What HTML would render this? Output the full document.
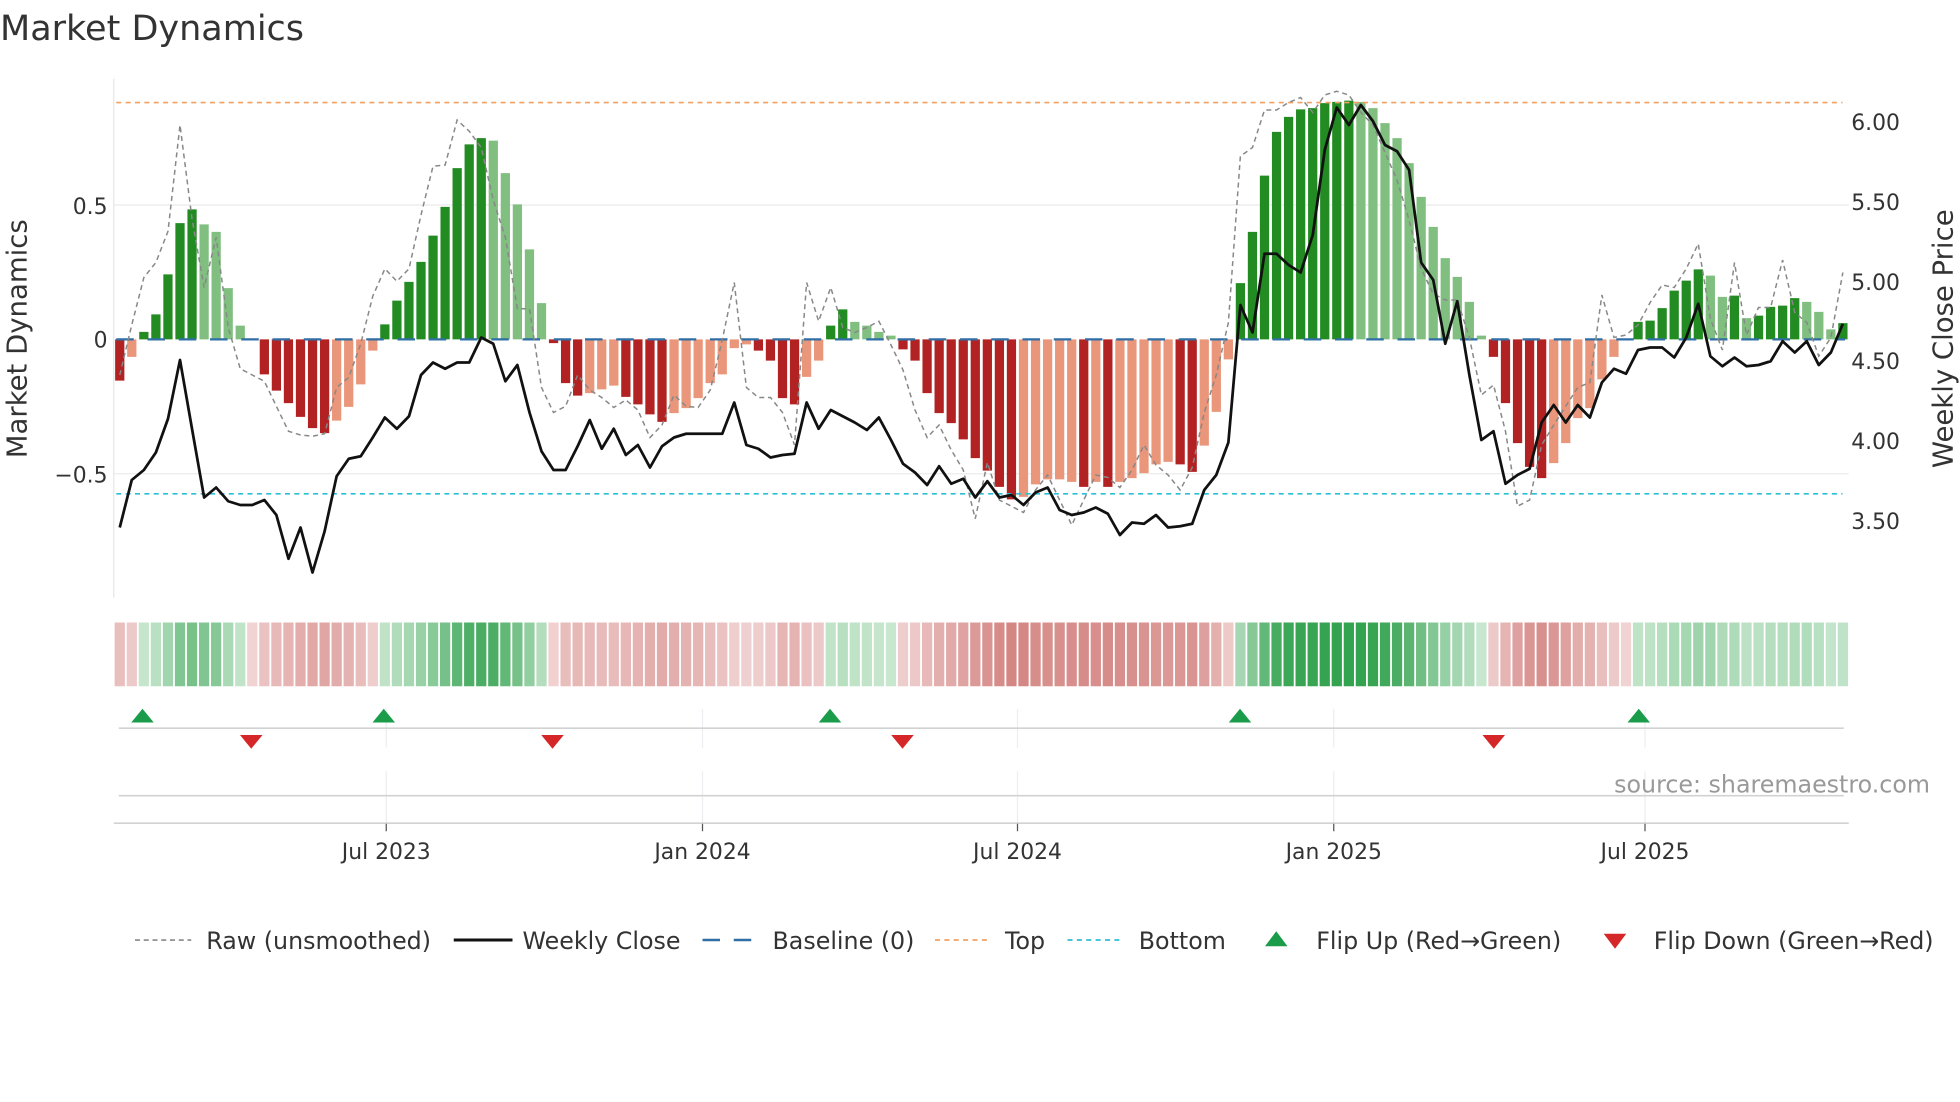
<!DOCTYPE html>
<html><head><meta charset="utf-8"><style>
html,body{margin:0;padding:0;background:#fff;width:1960px;height:1102px;overflow:hidden}
svg{display:block}
text{font-family:"DejaVu Sans","Liberation Sans",sans-serif;fill:#333}
</style></head><body>
<svg id="s" width="1960" height="1102" viewBox="0 0 1568 881.6" xmlns="http://www.w3.org/2000/svg">
<text x="0" y="32" font-size="28">Market Dynamics</text>
<!-- grid -->
<line x1="91" y1="164" x2="1479" y2="164" stroke="#ebebeb" stroke-width="1"/>
<line x1="91" y1="379" x2="1479" y2="379" stroke="#ebebeb" stroke-width="1"/>
<line x1="91" y1="63" x2="91" y2="478" stroke="#e6e6e6" stroke-width="1"/>
<g id="bars"></g>
<line x1="93" y1="82" x2="1474" y2="82" stroke="#f0a062" stroke-width="1.3" stroke-dasharray="4,3.5"/>
<line x1="93" y1="395" x2="1474" y2="395" stroke="#2bbfd6" stroke-width="1.3" stroke-dasharray="4,3.5"/>
<line x1="93" y1="271.5" x2="1476" y2="271.5" stroke="#2f6fa6" stroke-width="1.8" stroke-dasharray="14,11"/>
<polyline id="raw" fill="none" stroke="#888" stroke-width="1.2" stroke-dasharray="4,3"/>
<polyline id="close" fill="none" stroke="#111" stroke-width="2.2" stroke-linejoin="round"/>
<!-- left ticks -->
<text x="86" y="171" font-size="17.5" text-anchor="end">0.5</text>
<text x="86" y="278" font-size="17.5" text-anchor="end">0</text>
<text x="86" y="386" font-size="17.5" text-anchor="end">−0.5</text>
<text transform="translate(21,271) rotate(-90)" font-size="22" text-anchor="middle">Market Dynamics</text>
<!-- right ticks -->
<text x="1481" y="104" font-size="17.5">6.00</text>
<text x="1481" y="168" font-size="17.5">5.50</text>
<text x="1481" y="232" font-size="17.5">5.00</text>
<text x="1481" y="295" font-size="17.5">4.50</text>
<text x="1481" y="359" font-size="17.5">4.00</text>
<text x="1481" y="423" font-size="17.5">3.50</text>
<text transform="translate(1562,271) rotate(-90)" font-size="22" text-anchor="middle">Weekly Close Price</text>
<!-- heatmap -->
<g id="heat"></g>
<!-- marker panel -->
<g stroke="#eceef2" stroke-width="1">
<line x1="309" y1="567" x2="309" y2="598"/><line x1="562" y1="567" x2="562" y2="598"/><line x1="814" y1="567" x2="814" y2="598"/><line x1="1067" y1="567" x2="1067" y2="598"/><line x1="1316" y1="567" x2="1316" y2="598"/>
<line x1="309" y1="617" x2="309" y2="658"/><line x1="562" y1="617" x2="562" y2="658"/><line x1="814" y1="617" x2="814" y2="658"/><line x1="1067" y1="617" x2="1067" y2="658"/><line x1="1316" y1="617" x2="1316" y2="658"/>
</g>
<line x1="95" y1="582.5" x2="1475" y2="582.5" stroke="#d2d2d2" stroke-width="1.3"/>
<line x1="95" y1="636.5" x2="1475" y2="636.5" stroke="#d2d2d2" stroke-width="1.3"/>
<line x1="91" y1="658.5" x2="1479" y2="658.5" stroke="#d2d2d2" stroke-width="1.3"/>
<g fill="#1a9c4a">
<polygon points="105,578 123,578 114,567"/><polygon points="298,578 316,578 307,567"/><polygon points="655,578 673,578 664,567"/><polygon points="983,578 1001,578 992,567"/><polygon points="1302,578 1320,578 1311,567"/>
</g>
<g fill="#d62728">
<polygon points="192,588 210,588 201,599"/><polygon points="433,588 451,588 442,599"/><polygon points="713,588 731,588 722,599"/><polygon points="1186,588 1204,588 1195,599"/>
</g>
<text x="1544" y="634" font-size="19" text-anchor="end" style="fill:#999">source: sharemaestro.com</text>
<g stroke="#555" stroke-width="1"><line x1="309" y1="659" x2="309" y2="665"/><line x1="562" y1="659" x2="562" y2="665"/><line x1="814" y1="659" x2="814" y2="665"/><line x1="1067" y1="659" x2="1067" y2="665"/><line x1="1316" y1="659" x2="1316" y2="665"/></g>
<g font-size="17.5" text-anchor="middle">
<text x="309" y="687">Jul 2023</text><text x="562" y="687">Jan 2024</text><text x="814" y="687">Jul 2024</text><text x="1067" y="687">Jan 2025</text><text x="1316" y="687">Jul 2025</text>
</g>
<!-- legend -->
<line x1="108" y1="752" x2="153" y2="752" stroke="#888" stroke-width="1.3" stroke-dasharray="4,3"/>
<text x="165" y="759" font-size="19">Raw (unsmoothed)</text>
<line x1="363" y1="752" x2="410" y2="752" stroke="#111" stroke-width="2.4"/>
<text x="418" y="759" font-size="19">Weekly Close</text>
<line x1="562" y1="752" x2="606" y2="752" stroke="#2f6fa6" stroke-width="2" stroke-dasharray="14,11"/>
<text x="618" y="759" font-size="19">Baseline (0)</text>
<line x1="748" y1="752" x2="792" y2="752" stroke="#f0a062" stroke-width="1.4" stroke-dasharray="4,3.5"/>
<text x="804" y="759" font-size="19">Top</text>
<line x1="854" y1="752" x2="898" y2="752" stroke="#2bbfd6" stroke-width="1.4" stroke-dasharray="4,3.5"/>
<text x="911" y="759" font-size="19">Bottom</text>
<polygon points="1012,757 1030,757 1021,745" fill="#1a9c4a"/>
<text x="1053" y="759" font-size="19">Flip Up (Red→Green)</text>
<polygon points="1283,747 1301,747 1292,759" fill="#d62728"/>
<text x="1323" y="759" font-size="19">Flip Down (Green→Red)</text>
</svg>
<script>
(function(){
var NS="http://www.w3.org/2000/svg";
var d="-33R -14r 6G 20G 52G 93G 104G 92g 86g 41g 11g 0r -28R -41R -51R -62R -71R -75R -65r -54r -36r -9r 12G 31G 46G 62G 83G 106G 137G 156G 161G 159g 133g 108g 72g 29g -3R -35R -45R -43r -40r -37r -46R -52R -60R -66R -59r -55r -47r -35r -28r -7r -4r -9R -17R -47R -52R -30r -17r 11G 24G 14g 11g 6g 3g -8R -17R -43R -59R -67R -80R -95R -105R -118R -128R -126r -116r -112r -112r -114r -118R -114r -118R -114r -111r -107r -100r -98r -100R -106R -85r -58r -16r 45G 86G 131G 166G 178G 184G 185G 189G 190G 191G 190g 185g 173g 161g 141g 114g 90g 65g 50g 30g 3g -14R -51R -83R -102R -111R -99r -83r -63r -55r -32r -14r 0r 14G 15G 25G 39G 47G 56G 51g 34g 35G 17g 19G 26G 27G 33G 30g 22g 8g 13G".split(" ");
var col={G:"#228b22",g:"#80bf80",R:"#b22222",r:"#e9967a"};
var bars=document.getElementById("bars"),heat=document.getElementById("heat");
function mix(a,b,t){var r=[];for(var k=0;k<3;k++){r.push(Math.round(a[k]+(b[k]-a[k])*t));}return "rgb("+r.join(",")+")";}
for(var i=0;i<d.length;i++){
 var s=d[i],v=parseFloat(s),t=s.slice(-1),x=95.8+9.64*i;
 if(v!==0){var r=document.createElementNS(NS,"rect");
 r.setAttribute("x",x-3.7);r.setAttribute("width",7.4);
 r.setAttribute("y",v>0?271.5-v:271.5);r.setAttribute("height",Math.abs(v));
 r.setAttribute("fill",col[t]);bars.appendChild(r);}
 var h=document.createElementNS(NS,"rect");
 h.setAttribute("x",91+9.64*i+0.7);h.setAttribute("width",8.2);h.setAttribute("y",498);h.setAttribute("height",51);
 var g=(t=="G"||t=="g");
 var tt=g?Math.min(1,Math.abs(v)/190):Math.min(1,Math.abs(v)/128);
 tt=0.12+0.88*tt;
 h.setAttribute("fill",g?mix([222,241,226],[52,163,80],tt):mix([244,221,221],[212,134,131],tt));
 heat.appendChild(h);}
var xs=function(a){var o=[];for(var i=0;i<a.length;i++){o.push((95.8+9.64*i).toFixed(1)+","+a[i]);}return o.join(" ");};
var close=[422,384,376,362,335,288,343,398,390,401,404,404,400,412,447,422,458,425,381,367,365,350,334,343,333,300,290,295,290,290,270,275,305,292,330,361,376,376,357,336,359,343,364,356,374,357,350,347,347,347,347,322,356,359,366,364,363,322,343,328,333,338,344,334,352,371,378,388,373,387,383,398,385,398,396,404,394,390,408,412,410,406,411,428,418,419,412,422,421,419,392,380,354,244,266,203,203,212,218,188,120,86,100,84,97,116,121,136,210,224,275,241,300,352,345,387,380,375,338,324,338,324,334,306,295,299,280,278,278,286,270,243,285,293,286,293,292,289,273,282,273,292,282,259];
var raw=[300,260,222,210,185,100,175,230,190,262,295,300,305,325,345,348,349,347,310,302,275,237,215,225,215,172,133,132,96,105,118,160,190,247,247,310,330,325,300,312,318,326,320,328,350,340,316,325,326,312,272,226,310,318,318,330,356,226,257,230,262,266,262,257,276,296,328,350,340,360,376,415,370,400,405,410,392,380,400,420,400,380,382,390,376,356,372,380,392,374,330,300,258,125,118,88,88,82,78,90,76,73,76,90,100,122,144,176,215,235,240,240,270,316,308,345,405,400,356,340,325,310,306,236,270,268,260,242,228,230,215,195,255,280,210,268,246,246,208,250,258,285,270,218];
document.getElementById("close").setAttribute("points",xs(close));
document.getElementById("raw").setAttribute("points",xs(raw));
})();
</script>
</body></html>
